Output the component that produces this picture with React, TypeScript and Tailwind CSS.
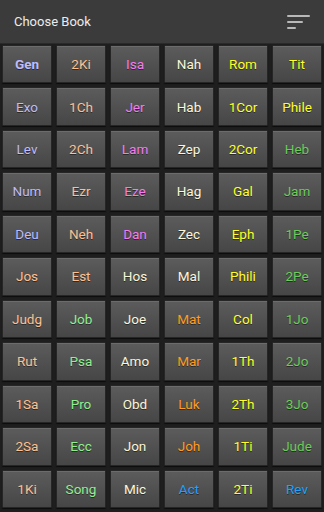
import React from 'react';

type Book = { name: string; color: string; bold?: boolean };

const LAV = 'text-[#bcbcff]';
const PEACH = 'text-[#ffc090]';
const GREEN = 'text-[#90f090]';
const PINK = 'text-[#f47cf0]';
const CREAM = 'text-[#fbf6d8]';
const ORANGE = 'text-[#ff9c20]';
const BLUE = 'text-[#22a0ff]';
const YELLOW = 'text-[#ffff26]';
const DKGREEN = 'text-[#6ccc5a]';

// listed column by column, like the grid flows
const books: Book[] = [
  { name: 'Gen', color: LAV, bold: true },
  { name: 'Exo', color: LAV },
  { name: 'Lev', color: LAV },
  { name: 'Num', color: LAV },
  { name: 'Deu', color: LAV },
  { name: 'Jos', color: PEACH },
  { name: 'Judg', color: PEACH },
  { name: 'Rut', color: PEACH },
  { name: '1Sa', color: PEACH },
  { name: '2Sa', color: PEACH },
  { name: '1Ki', color: PEACH },

  { name: '2Ki', color: PEACH },
  { name: '1Ch', color: PEACH },
  { name: '2Ch', color: PEACH },
  { name: 'Ezr', color: PEACH },
  { name: 'Neh', color: PEACH },
  { name: 'Est', color: PEACH },
  { name: 'Job', color: GREEN },
  { name: 'Psa', color: GREEN },
  { name: 'Pro', color: GREEN },
  { name: 'Ecc', color: GREEN },
  { name: 'Song', color: GREEN },

  { name: 'Isa', color: PINK },
  { name: 'Jer', color: PINK },
  { name: 'Lam', color: PINK },
  { name: 'Eze', color: PINK },
  { name: 'Dan', color: PINK },
  { name: 'Hos', color: CREAM },
  { name: 'Joe', color: CREAM },
  { name: 'Amo', color: CREAM },
  { name: 'Obd', color: CREAM },
  { name: 'Jon', color: CREAM },
  { name: 'Mic', color: CREAM },

  { name: 'Nah', color: CREAM },
  { name: 'Hab', color: CREAM },
  { name: 'Zep', color: CREAM },
  { name: 'Hag', color: CREAM },
  { name: 'Zec', color: CREAM },
  { name: 'Mal', color: CREAM },
  { name: 'Mat', color: ORANGE },
  { name: 'Mar', color: ORANGE },
  { name: 'Luk', color: ORANGE },
  { name: 'Joh', color: ORANGE },
  { name: 'Act', color: BLUE },

  { name: 'Rom', color: YELLOW },
  { name: '1Cor', color: YELLOW },
  { name: '2Cor', color: YELLOW },
  { name: 'Gal', color: YELLOW },
  { name: 'Eph', color: YELLOW },
  { name: 'Phili', color: YELLOW },
  { name: 'Col', color: YELLOW },
  { name: '1Th', color: YELLOW },
  { name: '2Th', color: YELLOW },
  { name: '1Ti', color: YELLOW },
  { name: '2Ti', color: YELLOW },

  { name: 'Tit', color: YELLOW },
  { name: 'Phile', color: YELLOW },
  { name: 'Heb', color: DKGREEN },
  { name: 'Jam', color: DKGREEN },
  { name: '1Pe', color: DKGREEN },
  { name: '2Pe', color: DKGREEN },
  { name: '1Jo', color: DKGREEN },
  { name: '2Jo', color: DKGREEN },
  { name: '3Jo', color: DKGREEN },
  { name: 'Jude', color: DKGREEN },
  { name: 'Rev', color: BLUE },
];

const MenuIcon: React.FC = () => (
  <svg width="26" height="18" viewBox="0 0 26 18">
    <rect x="1" y="2" width="23" height="2" rx="1" fill="#b8b8b8" />
    <rect x="1" y="8" width="16" height="2" rx="1" fill="#b8b8b8" />
    <rect x="1" y="14" width="9" height="2" rx="1" fill="#b8b8b8" />
  </svg>
);

const App: React.FC = () => {
  return (
    <div className="w-[324px] h-[512px] bg-[#1e1e1e] flex flex-col overflow-hidden font-['Roboto',sans-serif]">
      <div className="h-[43px] bg-[#3b3b3b] flex items-center justify-between pl-[14px] pr-[12px] shadow-[0_1px_0_#2a2a2a]">
        <span className="text-[13px] text-[#ececec]">Choose Book</span>
        <MenuIcon />
      </div>
      <div className="grid grid-flow-col grid-cols-6 grid-rows-11 gap-x-[4px] gap-y-[4px] px-[2px] pt-[2px] h-[465px]">
        {books.map((b) => (
          <button
            key={b.name}
            className={`flex items-center justify-center rounded-[1px] border border-[#262626] bg-gradient-to-b from-[#5c5c5c] to-[#464646] shadow-[inset_0_1px_0_#6c6c6c,0_1px_1px_rgba(0,0,0,0.6)] text-[13.5px] [text-shadow:0_1px_0_rgba(0,0,0,0.45)] ${b.color} ${b.bold ? 'font-bold' : 'font-normal'}`}
          >
            {b.name}
          </button>
        ))}
      </div>
    </div>
  );
};

export default App;
